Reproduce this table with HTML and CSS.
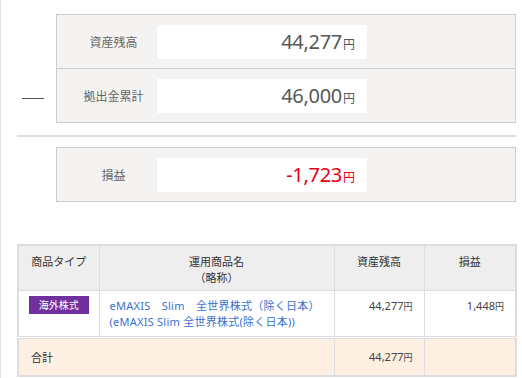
FILE: index.html
```html
<!DOCTYPE html>
<html lang="ja">
<head>
<meta charset="utf-8">
<link rel="stylesheet" href="styles.css">
</head>
<body>
<div class="page">
  <div class="summary">
    <div class="dash-col"><span class="dash"></span></div>
    <div class="box">
      <div class="row">
        <div class="label">資産残高</div>
        <div class="value">44,277<span class="yen">円</span></div>
      </div>
      <div class="row">
        <div class="label">拠出金累計</div>
        <div class="value">46,000<span class="yen">円</span></div>
      </div>
    </div>
  </div>
  <div class="sep"></div>
  <div class="summary single">
    <div class="dash-col"></div>
    <div class="box">
      <div class="row">
        <div class="label">損益</div>
        <div class="value neg">-1,723<span class="yen">円</span></div>
      </div>
    </div>
  </div>
  <table class="holdings">
    <colgroup>
      <col class="c1"><col class="c2"><col class="c3"><col class="c4">
    </colgroup>
    <thead>
      <tr>
        <th>商品タイプ</th>
        <th>運用商品名<br>（略称）</th>
        <th>資産残高</th>
        <th>損益</th>
      </tr>
    </thead>
    <tbody>
      <tr class="item">
        <td class="center"><span class="badge">海外株式</span></td>
        <td class="name"><a href="#">eMAXIS　Slim　全世界株式（除く日本）<br>(eMAXIS Slim 全世界株式(除く日本))</a></td>
        <td class="num">44,277<span class="syen">円</span></td>
        <td class="num">1,448<span class="syen">円</span></td>
      </tr>
      <tr class="total">
        <td colspan="2" class="tlabel">合計</td>
        <td class="num">44,277<span class="syen">円</span></td>
        <td></td>
      </tr>
    </tbody>
  </table>
</div>
</body>
</html>
```
FILE: styles.css
```css
html, body {
  margin: 0;
  padding: 0;
  background: #fff;
}
body {
  font-family: "Noto Sans", "Noto Sans CJK JP", sans-serif;
  color: #444;
}
.page {
  border-left: 1px solid #e0e0e0;
  min-height: 378px;
  box-sizing: border-box;
  padding: 14px 6px 0 15px;
  width: 522px;
}
.summary {
  display: flex;
}
.dash-col {
  width: 40px;
  flex: none;
  display: flex;
  align-items: flex-end;
}
.dash {
  display: block;
  width: 22px;
  height: 1px;
  background: #555;
  margin: 0 0 24px 6px;
}
.box {
  flex: 1;
  border: 1px solid #ccc;
  background: #f4f3f1;
}
.row {
  display: flex;
  align-items: center;
  height: 53px;
}
.row + .row {
  border-top: 1px solid #ccc;
}
.label {
  width: 100px;
  box-sizing: border-box;
  padding-left: 13px;
  text-align: center;
  font-size: 12px;
  color: #666;
  font-family: "Noto Sans CJK JP", sans-serif;
}
.value {
  width: 210px;
  height: 34px;
  box-sizing: border-box;
  background: #fff;
  text-align: right;
  padding-right: 12px;
  font-size: 20px;
  line-height: 34px;
  color: #585858;
  letter-spacing: -0.3px;
}
.value.neg {
  color: #e50012;
}
.yen {
  font-size: 12px;
  font-family: "Noto Sans CJK JP", sans-serif;
  letter-spacing: 0;
  margin-left: 1px;
}
.sep {
  height: 2px;
  background: #ddd;
  margin: 12px 0 10px 1px;
}
.holdings {
  margin-top: 42px;
  margin-left: 1px;
  width: 500px;
  border-collapse: collapse;
  table-layout: fixed;
  border: 2px solid #ddd;
  font-size: 11px;
  font-family: "Noto Sans", "Noto Sans CJK JP", sans-serif;
}
.c1 { width: 81px; }
.c2 { width: 235px; }
.c3 { width: 90px; }
.c4 { width: 92px; }
.holdings th {
  background: #eee;
  font-weight: normal;
  color: #333;
  border: 1px solid #ddd;
  vertical-align: top;
  padding: 7px 4px 5px;
  line-height: 16px;
  height: 32px;
  font-family: "Noto Sans CJK JP", sans-serif;
}
.holdings td {
  border: 1px solid #ddd;
  vertical-align: top;
  line-height: 16px;
}
.item td {
  padding: 7px 11px 6px 10px;
  height: 32px;
}
.item td.center {
  text-align: center;
  padding: 5px 4px 0;
}
.badge {
  display: inline-block;
  background: #7030a0;
  color: #fff;
  font-size: 10px;
  width: 60px;
  line-height: 18px;
  font-family: "Noto Sans CJK JP", sans-serif;
}
.item td.name {
  padding-right: 4px;
  white-space: nowrap;
}
.name a {
  color: #3a6fcf;
  text-decoration: none;
  letter-spacing: 0.25px;
}
.num {
  text-align: right;
  color: #444;
}
.syen {
  font-size: 9px;
  font-family: "Noto Sans CJK JP", sans-serif;
}
.total td {
  background: #fdefe2;
  border-top: 3px double #ddd;
  vertical-align: middle;
  height: 36px;
  padding: 0 11px 0 12px;
}
.tlabel {
  color: #333;
  font-family: "Noto Sans CJK JP", sans-serif;
}
```
